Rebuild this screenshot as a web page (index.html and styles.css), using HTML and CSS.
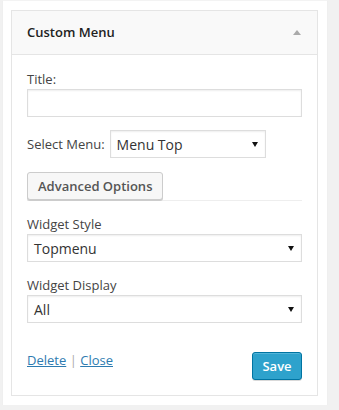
FILE: index.html
```html
<!DOCTYPE html>
<html lang="en">
  <head>
    <meta charset="UTF-8" />
    <meta name="viewport" content="width=device-width, initial-scale=1.0" />
    <title>Custom Menu widget</title>
    <link rel="stylesheet" href="styles.css">
  </head>
  <body>
    <div class="panel">
      <div class="widget">
        <div class="widget-top">
          <h3 class="widget-title">Custom Menu</h3>
          <span class="toggle-arrow"></span>
        </div>

        <div class="widget-inside">
          <div class="field">
            <label class="field-label">Title:</label>
            <input type="text" class="text-input" />
          </div>

          <div class="field-row">
            <label class="field-label">Select Menu:</label>
            <div class="select select-small">
              <span class="select-value">Menu Top</span>
              <span class="select-arrow"></span>
            </div>
          </div>

          <div class="tabs">
            <button class="tab-button">Advanced Options</button>
          </div>

          <div class="field field-spaced">
            <label class="field-label">Widget Style</label>
            <div class="select">
              <span class="select-value">Topmenu</span>
              <span class="select-arrow"></span>
            </div>
          </div>

          <div class="field field-spaced">
            <label class="field-label">Widget Display</label>
            <div class="select">
              <span class="select-value">All</span>
              <span class="select-arrow"></span>
            </div>
          </div>

          <div class="widget-actions">
            <div class="action-links">
              <a href="#" class="action-link">Delete</a>
              <span class="sep">|</span>
              <a href="#" class="action-link">Close</a>
            </div>
            <button class="save-button">Save</button>
          </div>
        </div>
      </div>
    </div>
  </body>
</html>
```

FILE: styles.css
```css
/* widget panel */

* {
  margin: 0;
  padding: 0;
  box-sizing: border-box;
  font-family: "Open Sans", "Liberation Sans", sans-serif;
}

body {
  background-color: #f1f1f1;
  color: #444;
  font-size: 13px;
}

.panel {
  width: 324px;
  margin-left: 3px;
  padding: 9px 9px 9px 8px; /* border-top takes 1px */
  background-color: #fff;
  border-top: 1px solid #f3f3f3;
  box-shadow: 0 1px 1px rgba(0, 0, 0, 0.06);
}

.widget {
  border: 1px solid #e5e5e5;
  background-color: #fff;
}

.widget-top {
  display: flex;
  justify-content: space-between;
  align-items: center;
  height: 44px;
  padding: 0 16px 0 15px;
  background-color: #f9f9f9;
  border-bottom: 1px solid #e5e5e5;
}

.widget-title {
  font-size: 13px;
  font-weight: 600;
  color: #222;
  line-height: 43px;
}

.toggle-arrow {
  width: 0;
  height: 0;
  border-left: 4px solid transparent;
  border-right: 4px solid transparent;
  border-bottom: 5px solid #aaa;
}

.widget-inside {
  padding: 15px;
}

.field-label {
  display: block;
  line-height: 18px;
  color: #444;
}

.text-input {
  display: block;
  width: 100%;
  height: 28px;
  margin-top: 1px;
  border: 1px solid #ddd;
  background-color: #fff;
  box-shadow: inset 0 1px 2px rgba(0, 0, 0, 0.07);
  outline: none;
}

.field-row {
  display: flex;
  align-items: center;
  gap: 5px;
  margin-top: 13px;
}

.select {
  display: flex;
  justify-content: space-between;
  align-items: center;
  height: 28px;
  margin-top: 1px;
  padding: 0 7px 0 6px;
  border: 1px solid #ddd;
  background-color: #fff;
  box-shadow: inset 0 1px 2px rgba(0, 0, 0, 0.07);
}

.select-small {
  width: 156px;
  margin-top: 0;
}

.select-value {
  font-size: 14px;
  color: #333;
}

.select-arrow {
  width: 0;
  height: 0;
  border-left: 3px solid transparent;
  border-right: 3px solid transparent;
  border-top: 5px solid #111;
}

.tabs {
  margin-top: 14px;
  border-bottom: 1px solid #eee;
}

.tab-button {
  display: block;
  height: 28px;
  padding: 0 10px;
  font-size: 13px;
  font-weight: 600;
  color: #555;
  background-color: #f7f7f7;
  border: 1px solid #ccc;
  border-radius: 3px;
  box-shadow: 0 1px 0 #ccc;
}

.field-spaced {
  margin-top: 14px;
}

.widget-actions {
  display: flex;
  justify-content: space-between;
  align-items: flex-start;
  margin-top: 28px;
}

.action-links {
  line-height: 18px;
}

.action-link {
  color: #2e7bb0;
  text-decoration: underline;
}

.sep {
  color: #aaa;
}

.save-button {
  height: 28px;
  width: 50px;
  margin-top: 1px;
  font-size: 13px;
  font-weight: 600;
  color: #fff;
  background-color: #2ea2cc;
  border: 1px solid #0074a2;
  border-radius: 3px;
  box-shadow: inset 0 1px 0 rgba(120, 200, 230, 0.5), 0 1px 0 rgba(0, 0, 0, 0.15);
}
```
